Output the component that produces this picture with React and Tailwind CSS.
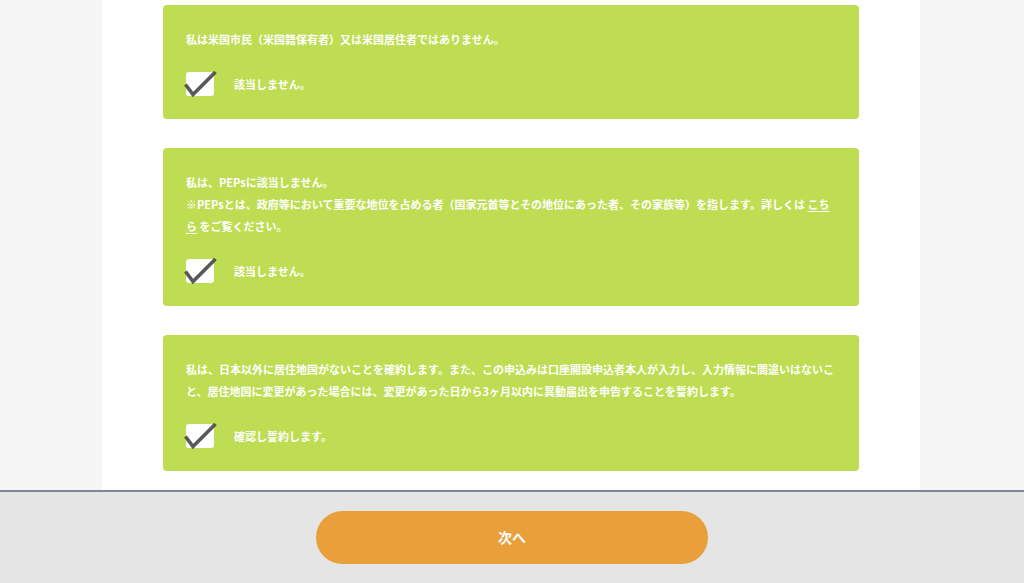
import React, { useState } from "react";

const items = [
  {
    id: "us",
    label: "該当しません。",
    body: <>私は米国市民（米国籍保有者）又は米国居住者ではありません。</>,
  },
  {
    id: "peps",
    label: "該当しません。",
    body: (
      <>
        私は、PEPsに該当しません。
        <br />
        ※PEPsとは、政府等において重要な地位を占める者（国家元首等とその地位にあった者、その家族等）を指します。詳しくは{" "}
        <a href="#" className="underline underline-offset-2">
          こちら
        </a>{" "}
        をご覧ください。
      </>
    ),
  },
  {
    id: "residence",
    label: "確認し誓約します。",
    body: (
      <>
        私は、日本以外に居住地国がないことを確約します。また、この申込みは口座開設申込者本人が入力し、入力情報に間違いはないこと、居住地国に変更があった場合には、変更があった日から3ヶ月以内に異動届出を申告することを誓約します。
      </>
    ),
  },
];

const CheckBox = ({ checked, onClick }) => (
  <button
    type="button"
    onClick={onClick}
    className="relative w-[28px] h-[24px] bg-white rounded-[3px] shrink-0"
  >
    {checked && (
      <svg
        viewBox="0 0 28 24"
        className="absolute inset-0 w-[28px] h-[24px] overflow-visible"
      >
        <path
          d="M-0.5 12.5 L7 22.5 L29.5 0"
          fill="none"
          stroke="#585858"
          strokeWidth="3.6"
        />
      </svg>
    )}
  </button>
);

export default function App() {
  const [checked, setChecked] = useState({ us: true, peps: true, residence: true });

  const toggle = (id) => setChecked((prev) => ({ ...prev, [id]: !prev[id] }));

  return (
    <div
      className="h-[583px] flex flex-col bg-[#f5f5f5] overflow-hidden"
      style={{ fontFamily: '"Noto Sans CJK JP", "Noto Sans", sans-serif' }}
    >
      <div className="flex-1 overflow-hidden">
        <div className="w-[818px] h-full ml-[102px] bg-white pt-[5px] px-[61px] flex flex-col gap-[29px]">
          {items.map((item) => (
            <div
              key={item.id}
              className="bg-[#bedd52] rounded-[4px] px-[23px] pt-[23px] pb-[23px] text-white font-bold text-[11px] leading-[22px]"
            >
              <p>{item.body}</p>
              <div className="flex items-center gap-[20px] mt-[22px]">
                <CheckBox checked={checked[item.id]} onClick={() => toggle(item.id)} />
                <span>{item.label}</span>
              </div>
            </div>
          ))}
        </div>
      </div>

      <div className="h-[93px] shrink-0 bg-[#e5e5e5] border-t-2 border-[#7e8796] flex items-center justify-center">
        <button
          type="button"
          className="w-[392px] h-[53px] rounded-full bg-[#e9a03b] text-white font-bold text-[14px]"
        >
          次へ
        </button>
      </div>
    </div>
  );
}
